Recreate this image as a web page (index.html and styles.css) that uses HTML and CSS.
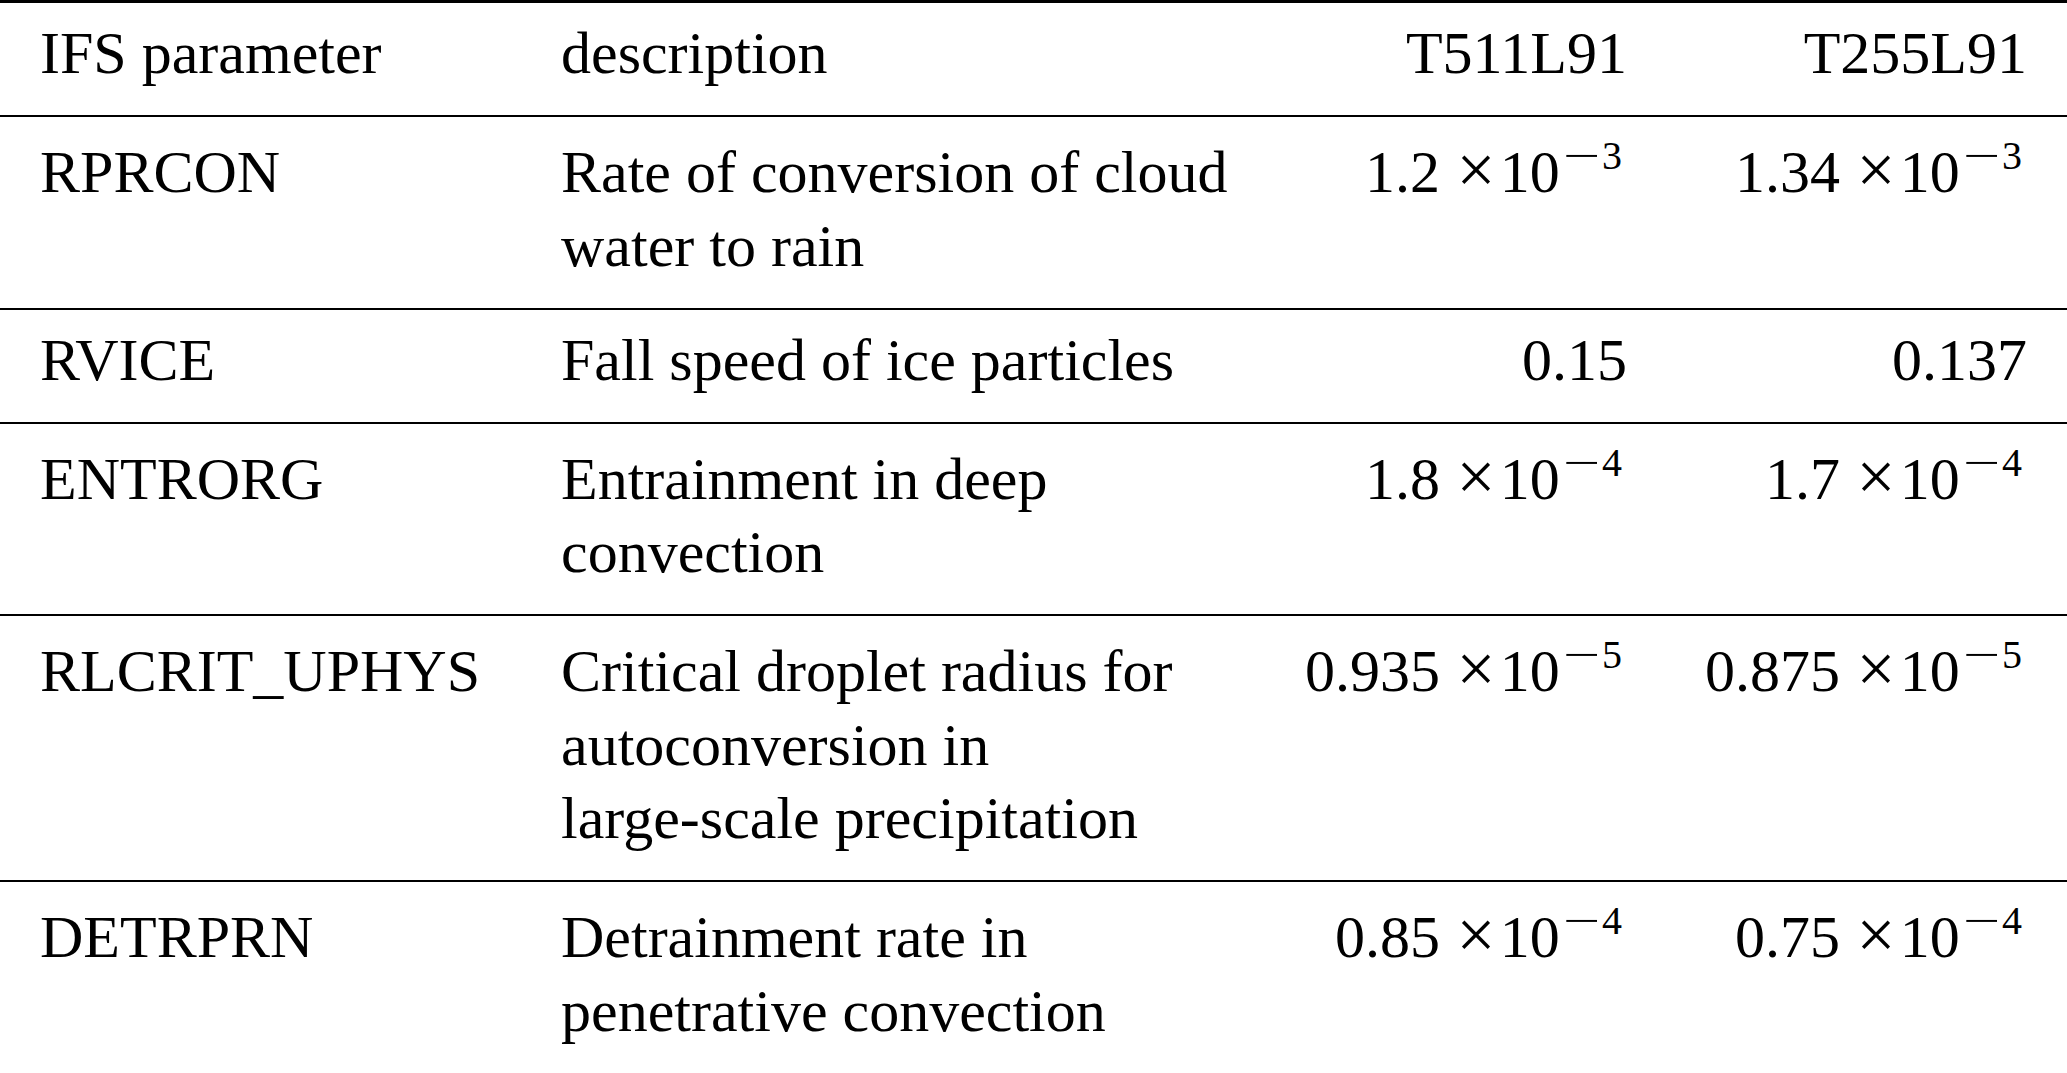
FILE: index.html
```html
<!DOCTYPE html>
<html lang="en">
<head>
<meta charset="utf-8">
<title>IFS parameters</title>
<link rel="stylesheet" href="styles.css">
</head>
<body>
<table class="params">
  <colgroup>
    <col class="w-name">
    <col class="w-desc">
    <col class="w-num">
    <col class="w-num-last">
  </colgroup>
  <thead>
    <tr>
      <th class="name">IFS parameter</th>
      <th class="desc">description</th>
      <th class="num">T511L91</th>
      <th class="num last">T255L91</th>
    </tr>
  </thead>
  <tbody>
    <tr>
      <td class="name">RPRCON</td>
      <td class="desc">Rate of conversion of cloud water to rain</td>
      <td class="num">1.2 <span class="times">×</span>10<sup><span class="minus">−</span>3</sup></td>
      <td class="num last">1.34 <span class="times">×</span>10<sup><span class="minus">−</span>3</sup></td>
    </tr>
    <tr>
      <td class="name">RVICE</td>
      <td class="desc">Fall speed of ice particles</td>
      <td class="num">0.15</td>
      <td class="num last">0.137</td>
    </tr>
    <tr>
      <td class="name">ENTRORG</td>
      <td class="desc">Entrainment in deep convection</td>
      <td class="num">1.8 <span class="times">×</span>10<sup><span class="minus">−</span>4</sup></td>
      <td class="num last">1.7 <span class="times">×</span>10<sup><span class="minus">−</span>4</sup></td>
    </tr>
    <tr>
      <td class="name">RLCRIT_UPHYS</td>
      <td class="desc">Critical droplet radius for autoconversion in <span class="nobr">large-scale</span> precipitation</td>
      <td class="num">0.935 <span class="times">×</span>10<sup><span class="minus">−</span>5</sup></td>
      <td class="num last">0.875 <span class="times">×</span>10<sup><span class="minus">−</span>5</sup></td>
    </tr>
    <tr>
      <td class="name">DETRPRN</td>
      <td class="desc">Detrainment rate in penetrative convection</td>
      <td class="num">0.85 <span class="times">×</span>10<sup><span class="minus">−</span>4</sup></td>
      <td class="num last">0.75 <span class="times">×</span>10<sup><span class="minus">−</span>4</sup></td>
    </tr>
  </tbody>
</table>
</body>
</html>
```

FILE: styles.css
```css
html, body {
  margin: 0;
  padding: 0;
  background: #ffffff;
}

.params {
  width: 2067px;
  table-layout: fixed;
  border-collapse: separate;
  border-spacing: 0;
  font-family: "Liberation Serif", "Times New Roman", serif;
  font-size: 60px;
  line-height: 73.5px;
  color: #000000;
}

.w-name { width: 521px; }
.w-desc { width: 725px; }
.w-num { width: 418px; }
.w-num-last { width: 403px; }

.params th,
.params td {
  padding: 14px 0 24.5px 0;
  vertical-align: baseline;
  font-weight: normal;
  text-align: left;
  border-bottom: 2px solid #000000;
}

.params thead th {
  border-top: 3px solid #000000;
}

.params tbody tr:last-child td {
  border-bottom-width: 3px;
}

.params .name {
  padding-left: 40px;
}

.params .desc {
  padding-left: 40px;
}

.nobr {
  white-space: nowrap;
}

.params .num {
  text-align: right;
  padding-right: 37px;
  white-space: nowrap;
}

.params .num.last {
  padding-right: 40px;
}

.times {
  display: inline-block;
  transform: translateY(-2px) scale(1.15);
  margin: 0 7px 0 4px;
}

.params sup {
  font-size: 40px;
  line-height: 50px;
  vertical-align: 23px;
  padding-left: 3px;
  padding-right: 5px;
}

.minus {
  display: inline-block;
  transform: scaleX(1.65);
  transform-origin: left center;
  margin-right: 16.6px;
}
```
